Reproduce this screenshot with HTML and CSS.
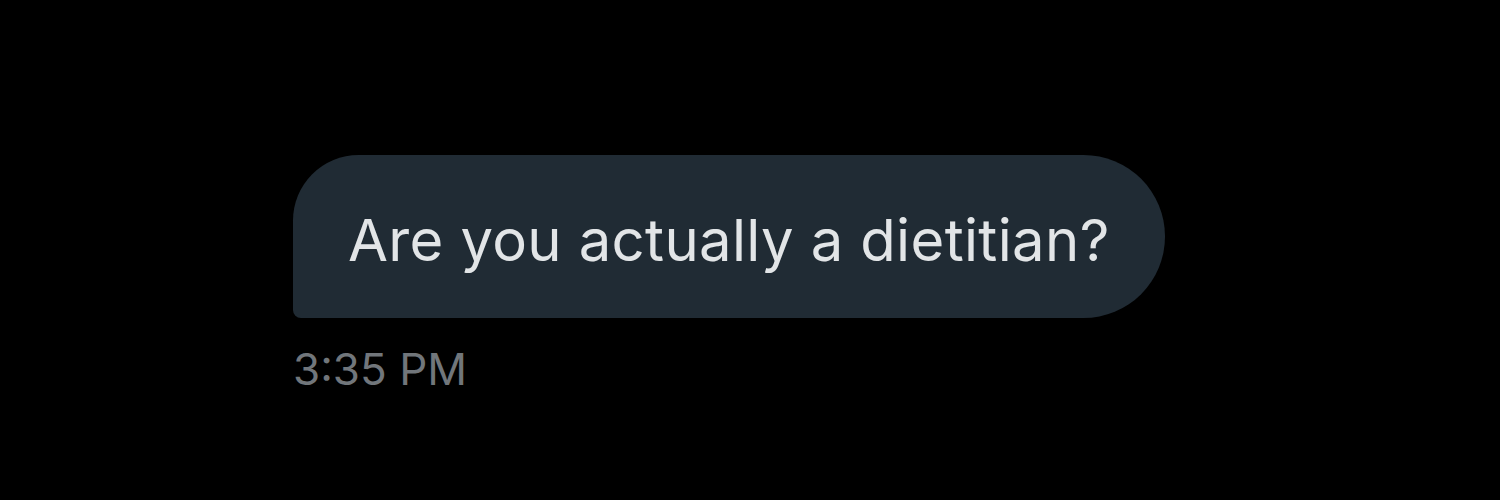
FILE: index.html
```html
<!doctype html>
<html>
<head>
<meta charset="utf-8">
<title>Message</title>
<link rel="stylesheet" href="styles.css">
</head>
<body>
	<div class="thread">
		<div class="bubble">Are you actually a dietitian?</div>
		<div class="time">3:35 PM</div>
	</div>
</body>
</html>
```

FILE: styles.css
```css
html, body {
	margin: 0;
	height: 100%;
	background: #000;
}
body {
	font-family: Inter, "Liberation Sans", Arial, sans-serif;
}
.thread {
	display: flex;
	flex-direction: column;
	align-items: flex-start;
	padding: 155px 0 0 293px;
}
.bubble {
	height: 163px;
	box-sizing: border-box;
	display: flex;
	align-items: center;
	padding: 6px 55px 0 55px;
	background: #202b34;
	color: #e2e5e7;
	font-size: 58px;
	letter-spacing: 0.35px;
	border-radius: 66px 82px 82px 8px;
}
.time {
	margin-top: 24px;
	color: #71767b;
	font-size: 44px;
}
```
